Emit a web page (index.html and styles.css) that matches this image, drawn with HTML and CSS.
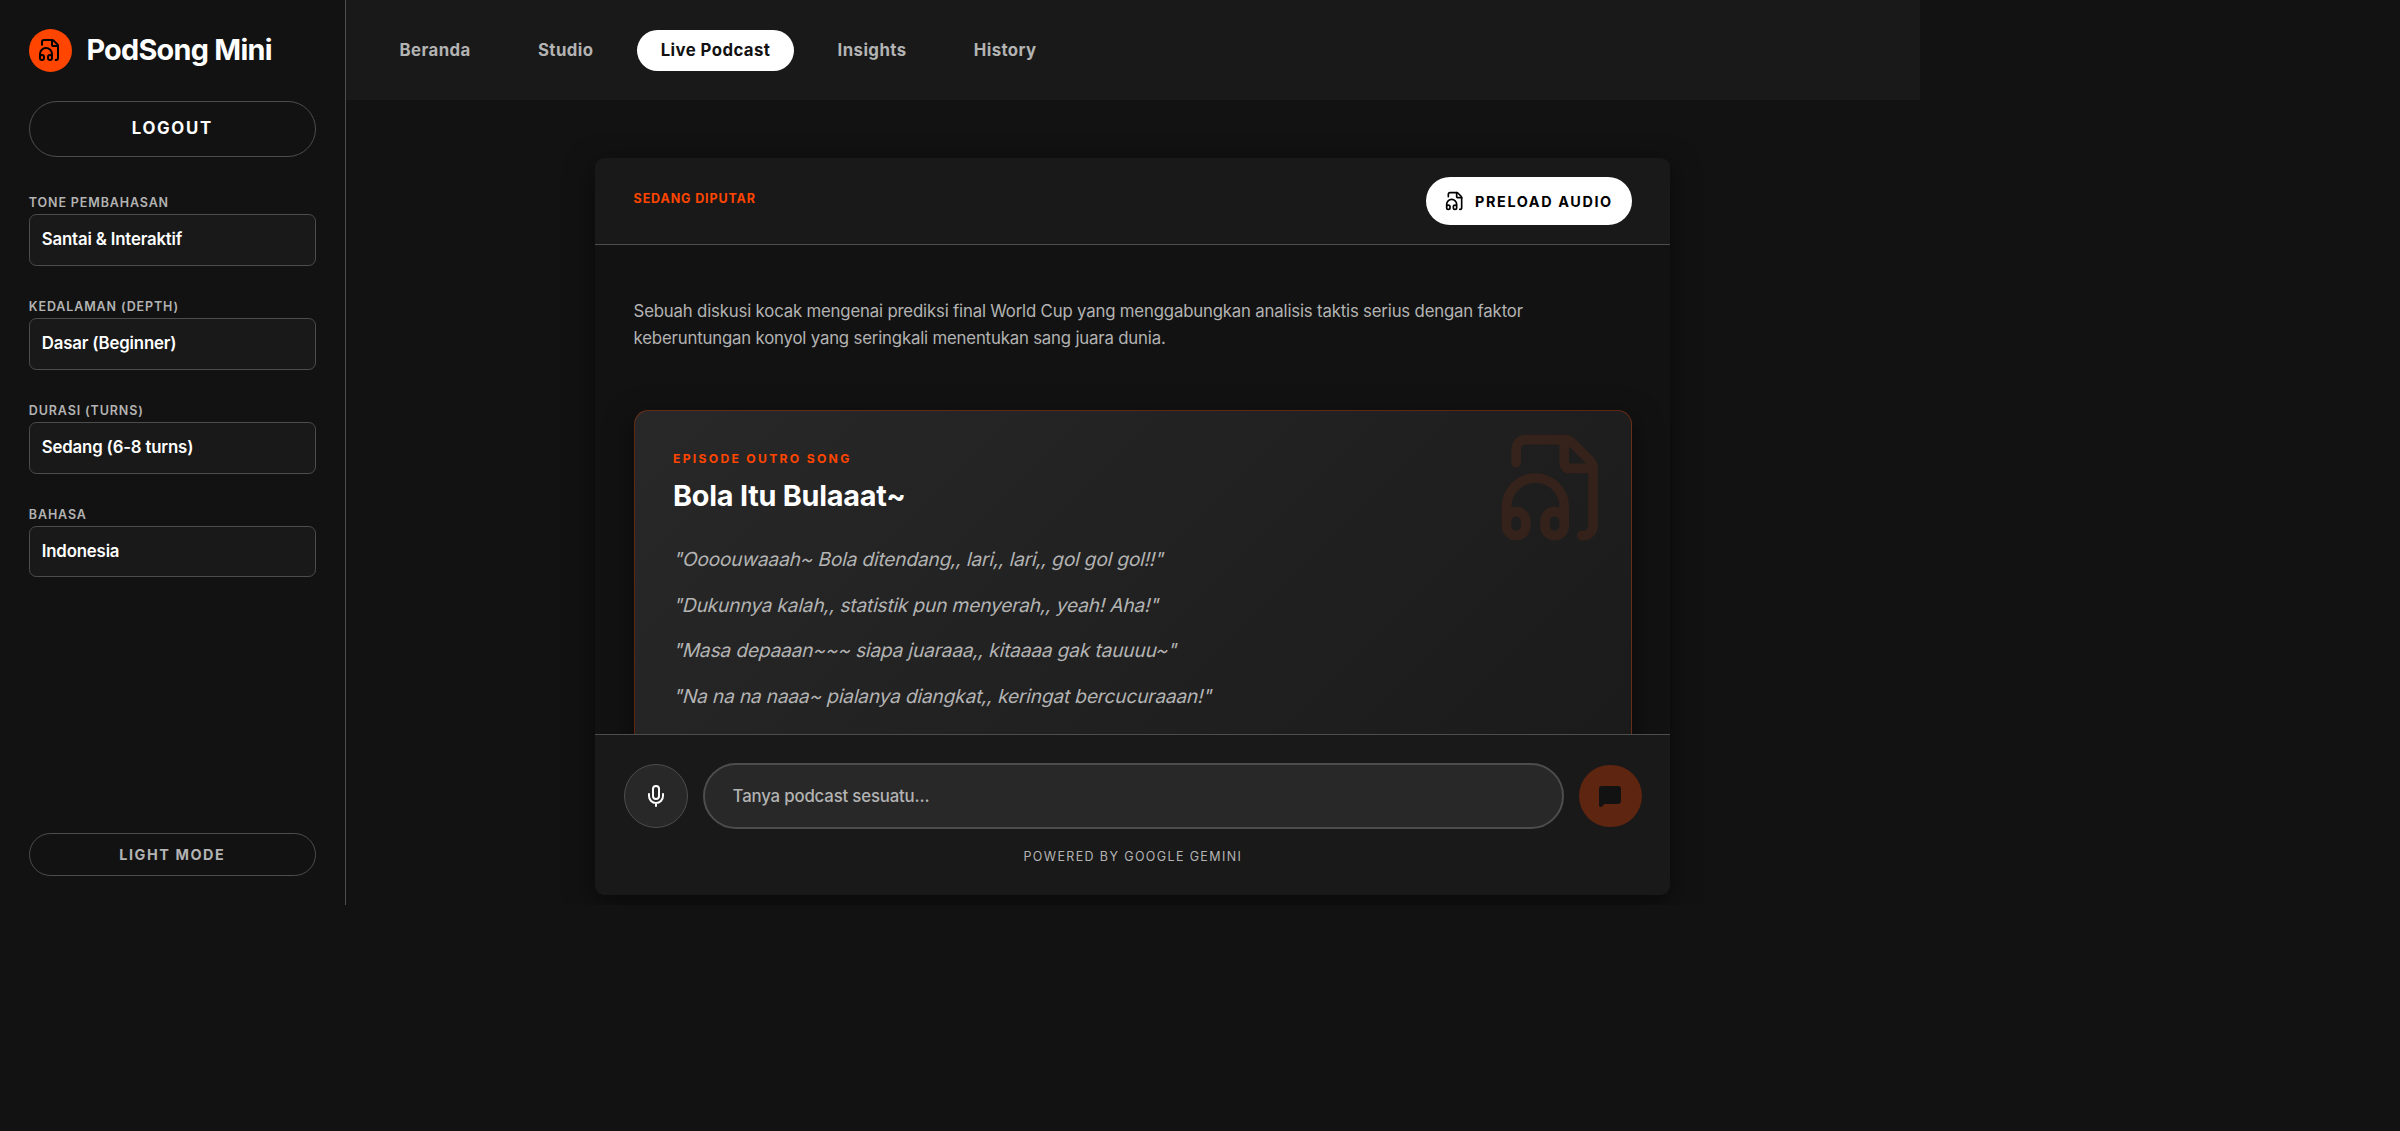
FILE: index.html
```html
<!DOCTYPE html>
<html lang="id">

<head>
    <meta charset="UTF-8">
    <meta name="viewport" content="width=device-width, initial-scale=1.0">
    <title>PodSong Mini</title>
    <link rel="stylesheet" href="styles.css">
</head>

<body>
    <svg class="sprite" aria-hidden="true">
        <symbol id="icon-audio" viewBox="0 0 24 24">
            <path d="M4 6.835V4a2 2 0 0 1 2-2h8a2.4 2.4 0 0 1 1.706.706l3.588 3.588A2.4 2.4 0 0 1 20 8v12a2 2 0 0 1-2 2h-.343"/>
            <path d="M14 2v5a1 1 0 0 0 1 1h5"/>
            <path d="M2 19a2 2 0 0 1 4 0v1a2 2 0 0 1-4 0v-4a6 6 0 0 1 12 0v4a2 2 0 0 1-4 0v-1a2 2 0 0 1 4 0"/>
        </symbol>
    </svg>

    <div class="app">
        <aside class="sidebar">
            <div class="brand">
                <span class="brand-logo"><svg class="icon"><use href="#icon-audio"/></svg></span>
                <h1>PodSong Mini</h1>
            </div>
            <button class="btn-logout">Logout</button>

            <div class="settings">
                <div class="field">
                    <label>Tone Pembahasan</label>
                    <div class="select">Santai &amp; Interaktif</div>
                </div>
                <div class="field">
                    <label>Kedalaman (Depth)</label>
                    <div class="select">Dasar (Beginner)</div>
                </div>
                <div class="field">
                    <label>Durasi (Turns)</label>
                    <div class="select">Sedang (6-8 turns)</div>
                </div>
                <div class="field">
                    <label>Bahasa</label>
                    <div class="select">Indonesia</div>
                </div>
            </div>

            <button class="btn-theme">Light Mode</button>
        </aside>

        <main class="main">
            <nav class="nav">
                <a href="#">Beranda</a>
                <a href="#">Studio</a>
                <a href="#" class="active">Live Podcast</a>
                <a href="#">Insights</a>
                <a href="#">History</a>
            </nav>

            <section class="player">
                <header class="player-header">
                    <span class="now-playing">Sedang Diputar</span>
                    <button class="btn-preload"><svg class="icon"><use href="#icon-audio"/></svg>Preload Audio</button>
                </header>

                <div class="player-body">
                    <p class="summary">Sebuah diskusi kocak mengenai prediksi final World Cup yang menggabungkan analisis taktis serius dengan faktor keberuntungan konyol yang seringkali menentukan sang juara dunia.</p>

                    <article class="song">
                        <svg class="icon song-icon"><use href="#icon-audio"/></svg>
                        <h3>Episode Outro Song</h3>
                        <h2>Bola Itu Bulaaat~</h2>
                        <div class="lyrics">
                            <p>"Oooouwaaah~ Bola ditendang,, lari,, lari,, gol gol gol!!"</p>
                            <p>"Dukunnya kalah,, statistik pun menyerah,, yeah! Aha!"</p>
                            <p>"Masa depaaan~~~ siapa juaraaa,, kitaaaa gak tauuuu~"</p>
                            <p>"Na na na naaa~ pialanya diangkat,, keringat bercucuraaan!"</p>
                        </div>
                    </article>
                </div>

                <footer class="composer">
                    <div class="composer-row">
                        <button class="btn-mic">
                            <svg class="icon" viewBox="0 0 24 24">
                                <rect x="9" y="2" width="6" height="13" rx="3"/>
                                <path d="M12 19v3M19 10v2a7 7 0 0 1-14 0v-2"/>
                            </svg>
                        </button>
                        <input class="ask" type="text" placeholder="Tanya podcast sesuatu...">
                        <button class="btn-send">
                            <svg class="icon" viewBox="0 0 24 24">
                                <path d="M22 17a2 2 0 0 1-2 2H6.828a2 2 0 0 0-1.414.586l-2.202 2.202A.71.71 0 0 1 2 21.286V5a2 2 0 0 1 2-2h16a2 2 0 0 1 2 2z"/>
                            </svg>
                        </button>
                    </div>
                    <p class="powered">Powered by Google Gemini</p>
                </footer>
            </section>
        </main>
    </div>
</body>

</html>
```
FILE: styles.css
```css
* {
    box-sizing: border-box;
    margin: 0;
    padding: 0;
}

html {
    font-size: 19.2px;
}

body {
    background: #121212;
    color: #fff;
    font-family: Inter, "Liberation Sans", sans-serif;
}

button,
input {
    font-family: inherit;
    color: inherit;
}

button {
    border: none;
    background: none;
    text-transform: uppercase;
}

.sprite {
    display: none;
}

.icon {
    fill: none;
    stroke: currentColor;
    stroke-width: 2;
    stroke-linecap: round;
    stroke-linejoin: round;
}

.app {
    display: flex;
    width: 1920px;
    height: 905px;
    overflow: hidden;
}

/* sidebar */
.sidebar {
    display: flex;
    flex-direction: column;
    width: 345.6px;
    padding: 1.5rem;
    border-right: 1px solid #4d4d4d;
}

.brand {
    display: flex;
    align-items: center;
    gap: 14.4px;
    height: 43.2px;
}

.brand-logo {
    display: flex;
    align-items: center;
    justify-content: center;
    width: 43.2px;
    height: 43.2px;
    border-radius: 50%;
    background: #ff4500;
    color: #000;
}

.brand-logo .icon {
    width: 24px;
    height: 24px;
}

.brand h1 {
    margin-bottom: 2px;
    font-size: 28.8px;
    font-weight: 700;
    letter-spacing: -0.025em;
}

.btn-logout {
    height: 56px;
    margin-top: 1.5rem;
    padding-bottom: 1px;
    border: 1px solid #4d4d4d;
    border-radius: 28px;
    font-size: 16.8px;
    font-weight: 700;
    letter-spacing: 0.1em;
}

.settings {
    display: flex;
    flex-direction: column;
    gap: 32.8px;
    margin-top: 37.6px;
}

.field label {
    display: block;
    height: 19.2px;
    font-size: 12.5px;
    font-weight: 600;
    line-height: 18.4px;
    letter-spacing: 0.07em;
    text-transform: uppercase;
    color: #b3b3b3;
}

.select {
    height: 52px;
    padding: 0 12px;
    border: 1px solid #4d4d4d;
    border-radius: 7.2px;
    background: #191919;
    font-size: 16.8px;
    font-weight: 600;
    line-height: 49px;
    letter-spacing: -0.01em;
}

.field:last-child .select {
    height: 51px;
}

.btn-theme {
    height: 43px;
    margin-top: auto;
    border: 1px solid #4d4d4d;
    border-radius: 22px;
    color: #b3b3b3;
    font-size: 14.4px;
    font-weight: 700;
    letter-spacing: 0.11em;
}

/* top navigation */
.main {
    flex: 1;
}

.nav {
    display: flex;
    align-items: center;
    gap: 19.2px;
    height: 100px;
    padding: 0 30px;
    background: #191919;
}

.nav a {
    height: 41px;
    padding: 0 24px;
    border-radius: 21px;
    color: #b3b3b3;
    font-size: 16.8px;
    font-weight: 700;
    line-height: 41px;
    letter-spacing: 0.025em;
    text-decoration: none;
}

.nav a.active {
    background: #fff;
    color: #121212;
}

/* player */
.player {
    display: flex;
    flex-direction: column;
    width: 1075.2px;
    height: 737px;
    margin: 58px auto 0;
    border-radius: 9.6px;
    background: #121212;
    box-shadow: 0 8px 29px rgba(0, 0, 0, 0.5);
    overflow: hidden;
}

.player-header {
    display: flex;
    justify-content: space-between;
    height: 87px;
    padding: 19px 38.4px;
    border-bottom: 1px solid #4d4d4d;
    background: #191919;
}

.now-playing {
    margin-top: 14px;
    color: #ff4500;
    font-size: 12.5px;
    font-weight: 700;
    line-height: 16px;
    letter-spacing: 0.07em;
    text-transform: uppercase;
}

.btn-preload {
    display: flex;
    align-items: center;
    gap: 9.6px;
    height: 48px;
    padding: 0 19.2px;
    border-radius: 24px;
    background: #fff;
    color: #000;
    font-size: 14.4px;
    font-weight: 700;
    letter-spacing: 0.112em;
}

.btn-preload .icon {
    width: 20px;
    height: 20px;
}

.player-body {
    flex: 1;
    min-height: 0;
    padding: 53px 38.4px 0;
    overflow: hidden;
}

.summary {
    max-width: 922px;
    color: #b3b3b3;
    font-size: 16.8px;
    line-height: 27.3px;
    letter-spacing: -0.011em;
}

.song {
    position: relative;
    height: 480px;
    margin-top: 57px;
    padding: 39.4px 38.4px;
    border: 1px solid rgba(255, 69, 0, 0.3);
    border-radius: 14.4px;
    background: linear-gradient(135deg, #282828, #191919);
    box-shadow: 0 8px 29px rgba(0, 0, 0, 0.5);
}

.song-icon {
    position: absolute;
    top: 19.2px;
    right: 19.2px;
    width: 115.2px;
    height: 115.2px;
    color: #ff4500;
    opacity: 0.1;
}

.song h3 {
    color: #ff4500;
    font-size: 12.2px;
    font-weight: 700;
    line-height: 18px;
    letter-spacing: 0.186em;
    text-transform: uppercase;
}

.song h2 {
    margin-top: 8.6px;
    font-size: 28.8px;
    font-weight: 700;
    line-height: 38.4px;
    letter-spacing: -0.008em;
}

.lyrics {
    display: flex;
    flex-direction: column;
    gap: 14.4px;
    margin-top: 29.2px;
    color: #b3b3b3;
    font-size: 19.2px;
    line-height: 31.2px;
    letter-spacing: -0.0105em;
}

/* slanted upright glyphs rather than the italic cut */
.lyrics p {
    transform: skewX(-14deg);
    transform-origin: 0 22px;
}

/* question box */
.composer {
    height: 161px;
    padding: 28px 28.8px 0;
    border-top: 1px solid #4d4d4d;
    background: #191919;
}

.composer-row {
    display: flex;
    align-items: center;
    gap: 15px;
}

.btn-mic,
.btn-send {
    display: flex;
    flex: none;
    align-items: center;
    justify-content: center;
    border-radius: 50%;
}

.btn-mic {
    width: 64px;
    height: 64px;
    border: 1px solid #4d4d4d;
    background: #282828;
}

.btn-mic .icon,
.btn-send .icon {
    width: 24px;
    height: 24px;
}

.ask {
    flex: 1;
    height: 66px;
    padding: 0 27.6px;
    border: 2px solid #4d4d4d;
    border-radius: 33px;
    background: #282828;
    font-size: 16.8px;
    font-weight: 500;
    letter-spacing: -0.01em;
}

.ask::placeholder {
    color: #b3b3b3;
}

.btn-send {
    width: 62.4px;
    height: 62.4px;
    background: #5e2510;
    color: #121212;
}

.btn-send .icon {
    fill: currentColor;
}

.powered {
    margin-top: 19.2px;
    color: #b3b3b3;
    font-size: 12.5px;
    line-height: 18px;
    letter-spacing: 0.11em;
    text-align: center;
    text-transform: uppercase;
}
```
